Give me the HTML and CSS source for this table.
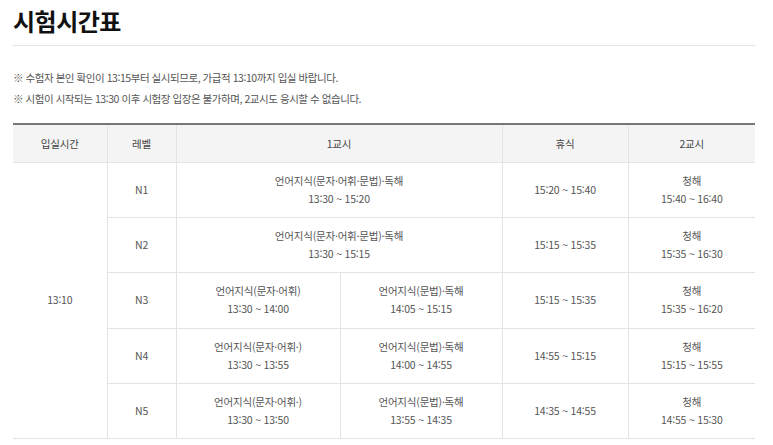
FILE: index.html
```html
<!DOCTYPE html>
<html lang="ko">
<head>
<meta charset="utf-8">
<link rel="stylesheet" href="styles.css">
</head>
<body>
<div class="wrap">
  <h1 class="title">시험시간표</h1>
  <ul class="notes">
    <li>※ 수험자 본인 확인이 13:15부터 실시되므로, 가급적 13:10까지 입실 바랍니다.</li>
    <li>※ 시험이 시작되는 13:30 이후 시험장 입장은 불가하며, 2교시도 응시할 수 없습니다.</li>
  </ul>
  <table class="tt">
    <colgroup>
      <col class="c-entry"><col class="c-level"><col class="c-p1a"><col class="c-p1b"><col class="c-rest"><col class="c-p2">
    </colgroup>
    <thead>
      <tr><th>입실시간</th><th>레벨</th><th colspan="2">1교시</th><th>휴식</th><th>2교시</th></tr>
    </thead>
    <tbody>
      <tr>
        <td rowspan="5">13:10</td>
        <td>N1</td>
        <td colspan="2">언어지식(문자·어휘·문법)·독해<br>13:30 ~ 15:20</td>
        <td>15:20 ~ 15:40</td>
        <td>청해<br>15:40 ~ 16:40</td>
      </tr>
      <tr>
        <td>N2</td>
        <td colspan="2">언어지식(문자·어휘·문법)·독해<br>13:30 ~ 15:15</td>
        <td>15:15 ~ 15:35</td>
        <td>청해<br>15:35 ~ 16:30</td>
      </tr>
      <tr>
        <td>N3</td>
        <td>언어지식(문자·어휘)<br>13:30 ~ 14:00</td>
        <td>언어지식(문법)·독해<br>14:05 ~ 15:15</td>
        <td>15:15 ~ 15:35</td>
        <td>청해<br>15:35 ~ 16:20</td>
      </tr>
      <tr>
        <td>N4</td>
        <td>언어지식(문자·어휘·)<br>13:30 ~ 13:55</td>
        <td>언어지식(문법)·독해<br>14:00 ~ 14:55</td>
        <td>14:55 ~ 15:15</td>
        <td>청해<br>15:15 ~ 15:55</td>
      </tr>
      <tr>
        <td>N5</td>
        <td>언어지식(문자·어휘·)<br>13:30 ~ 13:50</td>
        <td>언어지식(문법)·독해<br>13:55 ~ 14:35</td>
        <td>14:35 ~ 14:55</td>
        <td>청해<br>14:55 ~ 15:30</td>
      </tr>
    </tbody>
  </table>
</div>
</body>
</html>
```
FILE: styles.css
```css
html, body {
  margin: 0;
  padding: 0;
  background: #fff;
}
body {
  font-family: "Noto Sans CJK KR", "Noto Sans", sans-serif;
  color: #555;
}
.wrap {
  width: 742px;
  padding-left: 13px;
}
.title {
  margin: 0;
  padding-top: 3px;
  height: 42px;
  line-height: 36px;
  font-size: 24px;
  font-weight: 700;
  color: #111;
  letter-spacing: -0.5px;
  border-bottom: 1px solid #e4e4e4;
}
.notes {
  list-style: none;
  margin: 21px 0 0;
  padding: 0;
  font-size: 10.5px;
  line-height: 21px;
  color: #555;
  letter-spacing: -0.45px;
}
.tt {
  margin-top: 14px;
  width: 742px;
  border-collapse: collapse;
  table-layout: fixed;
  border-top: 2px solid #777;
  font-size: 10.5px;
  color: #555;
  letter-spacing: -0.2px;
}
.c-entry { width: 94px; }
.c-level { width: 69px; }
.c-p1a { width: 164px; }
.c-p1b { width: 162px; }
.c-rest { width: 126px; }
.c-p2 { width: 127px; }
.tt th {
  background: #f4f4f4;
  font-weight: 400;
  height: 37px;
  padding: 0;
  border-left: 1px solid #e3e3e3;
  border-bottom: 1px solid #e3e3e3;
  color: #444;
}
.tt td {
  height: 54.2px;
  padding: 0;
  text-align: center;
  line-height: 18px;
  border-left: 1px solid #e3e3e3;
  border-bottom: 1px solid #e3e3e3;
}
.tt tr > :first-child {
  border-left: 0;
}
.tt tbody tr:not(:first-child) > td:first-child {
  border-left: 1px solid #e3e3e3;
}
```
